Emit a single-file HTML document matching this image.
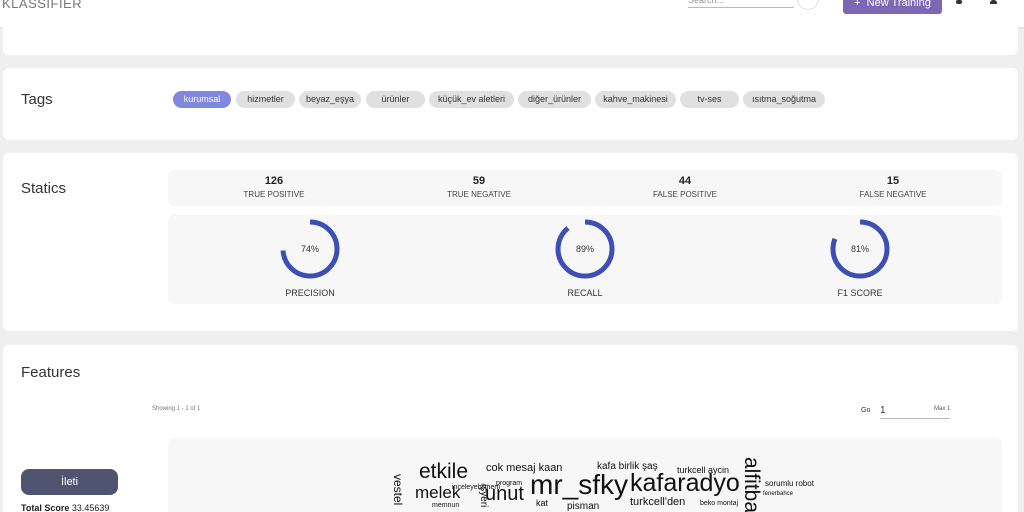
<!DOCTYPE html><html><head><style>
html,body{margin:0;width:1024px;height:512px;overflow:hidden}
body{background:#efefef;font-family:"Liberation Sans",sans-serif;position:relative}
.a{position:absolute}
.card{position:absolute;left:3px;right:6px;background:#fff;border-radius:6px}
.tag{position:absolute;top:91px;height:17px;border-radius:9px;background:#e0e0e0;font-size:9px;color:#333;text-align:center;line-height:17px}
.h{font-size:15px;color:#333}
.st{position:absolute;top:175px;font-size:8px;color:#444;text-align:center;width:140px}
.st b{display:block;font-size:11px;color:#222;margin-bottom:3px}
.w{position:absolute;color:#111;white-space:nowrap;line-height:1}
</style></head><body>
<div class="a" style="left:0;top:0;width:1024px;height:27px;background:#fff;box-shadow:0 1px 3px #ddd"></div>
<div class="a" style="left:2px;top:-4px;font-size:13px;color:#777;letter-spacing:0.5px">KLASSIFIER</div>
<div class="a" style="left:688px;top:-5px;font-size:9px;color:#999">Search...</div>
<div class="a" style="left:688px;top:7px;width:106px;height:1px;background:#bbb"></div>
<div class="a" style="left:797px;top:-12px;width:20px;height:20px;border-radius:50%;border:1px solid #ddd"></div>
<div class="a" style="left:843px;top:-8px;width:99px;height:22px;background:#7b68b5;border-radius:3px;color:#fff;font-size:11px;line-height:22px;text-align:center">+&nbsp; New Training</div>
<div class="a" style="left:956px;top:0;width:6px;height:4px;background:#333;border-radius:2px"></div>
<div class="a" style="left:990px;top:0;width:7px;height:4px;background:#333;border-radius:3px 3px 0 0"></div>
<div class="card" style="top:27px;height:28px;border-radius:0 0 6px 6px"></div>
<div class="card" style="top:68px;height:72px"></div>
<div class="a h" style="left:21px;top:91px">Tags</div>
<div class="tag" style="left:173px;width:58px;background:#7f87df;color:#fff">kurumsal</div>
<div class="tag" style="left:236px;width:59px">hizmetler</div>
<div class="tag" style="left:299px;width:62px">beyaz_eşya</div>
<div class="tag" style="left:366px;width:59px">ürünler</div>
<div class="tag" style="left:429px;width:85px">küçük_ev aletleri</div>
<div class="tag" style="left:518px;width:73px">diğer_ürünler</div>
<div class="tag" style="left:595px;width:81px">kahve_makinesi</div>
<div class="tag" style="left:680px;width:59px">tv-ses</div>
<div class="tag" style="left:743px;width:82px">ısıtma_soğutma</div>
<div class="card" style="top:153px;height:178px"></div>
<div class="a h" style="left:21px;top:180px">Statics</div>
<div class="a" style="left:168px;top:170px;width:834px;height:36px;background:#f7f7f7;border-radius:6px"></div>
<div class="st" style="left:204px"><b>126</b>TRUE POSITIVE</div>
<div class="st" style="left:409px"><b>59</b>TRUE NEGATIVE</div>
<div class="st" style="left:615px"><b>44</b>FALSE POSITIVE</div>
<div class="st" style="left:823px"><b>15</b>FALSE NEGATIVE</div>
<div class="a" style="left:168px;top:215px;width:834px;height:89px;background:#f7f7f7;border-radius:6px"></div>
<svg class="a" style="left:0;top:0" width="1024" height="512">
<g fill="none" stroke="#3d4fb5" stroke-width="5">
<circle cx="310" cy="249" r="27" stroke-dasharray="125.5 170" transform="rotate(-90 310 249)"/>
<circle cx="585" cy="249" r="27" stroke-dasharray="151 170" transform="rotate(-90 585 249)"/>
<circle cx="860" cy="249" r="27" stroke-dasharray="137.4 170" transform="rotate(-90 860 249)"/>
</g>
<g font-family="Liberation Sans" font-size="9" fill="#333" text-anchor="middle">
<text x="310" y="252">74%</text><text x="585" y="252">89%</text><text x="860" y="252">81%</text>
<text x="310" y="296">PRECISION</text><text x="585" y="296">RECALL</text><text x="860" y="296">F1 SCORE</text>
</g></svg>
<div class="card" style="top:345px;height:167px;border-radius:6px 6px 0 0"></div>
<div class="a h" style="left:21px;top:364px">Features</div>
<div class="a" style="left:152px;top:406px;font-size:6px;color:#777">Showing 1 - 1 of 1</div>
<div class="a" style="left:861px;top:407px;font-size:7px;color:#333">Go</div>
<div class="a" style="left:880px;top:405px;font-size:10px;color:#333">1</div>
<div class="a" style="left:934px;top:406px;font-size:6px;color:#555">Max 1</div>
<div class="a" style="left:880px;top:418px;width:70px;height:1px;background:#bbb"></div>
<div class="a" style="left:168px;top:438px;width:834px;height:74px;background:#f7f7f7;border-radius:6px 6px 0 0"></div>
<div class="a" style="left:21px;top:469px;width:97px;height:26px;background:#4f5470;border-radius:8px;color:#fff;font-size:11px;text-align:center;line-height:26px">İleti</div>
<div class="a" style="left:21px;top:503px;font-size:9px;color:#222"><b>Total Score</b> 33.45639</div>
<div class="w" style="left:419px;top:461px;font-size:21px">etkile</div>
<div class="w" style="left:415px;top:484px;font-size:17px">melek</div>
<div class="w" style="left:485px;top:484px;font-size:20px">unut</div>
<div class="w" style="left:530px;top:471px;font-size:28px">mr_sfky</div>
<div class="w" style="left:630px;top:471px;font-size:25px">kafaradyo</div>
<div class="w" style="left:486px;top:463px;font-size:11px">cok mesaj kaan</div>
<div class="w" style="left:597px;top:462px;font-size:10px">kafa birlik şaş</div>
<div class="w" style="left:677px;top:466px;font-size:9px">turkcell aycin</div>
<div class="w" style="left:630px;top:497px;font-size:11px">turkcell'den</div>
<div class="w" style="left:765px;top:480px;font-size:8px">sorumlu robot</div>
<div class="w" style="left:496px;top:480px;font-size:7px">program</div>
<div class="w" style="left:567px;top:502px;font-size:10px">pisman</div>
<div class="w" style="left:536px;top:499px;font-size:9px">kat</div>
<div class="w" style="left:432px;top:502px;font-size:7px">memnun</div>
<div class="w" style="left:763px;top:491px;font-size:6px">fenerbahce</div>
<div class="w" style="left:700px;top:500px;font-size:7px">beko montaj</div>
<div class="w" style="left:452px;top:484px;font-size:7px">inceleyebilmem</div>
<div class="w" style="top:457px;font-size:21px;transform:rotate(90deg);transform-origin:left top;left:762px">alfitbal</div>
<div class="w" style="left:404px;top:474px;font-size:12px;transform:rotate(90deg);transform-origin:left top">vestel</div>
<div class="w" style="left:488px;top:484px;font-size:10px;transform:rotate(90deg);transform-origin:left top">işyeri</div>
</body></html>
